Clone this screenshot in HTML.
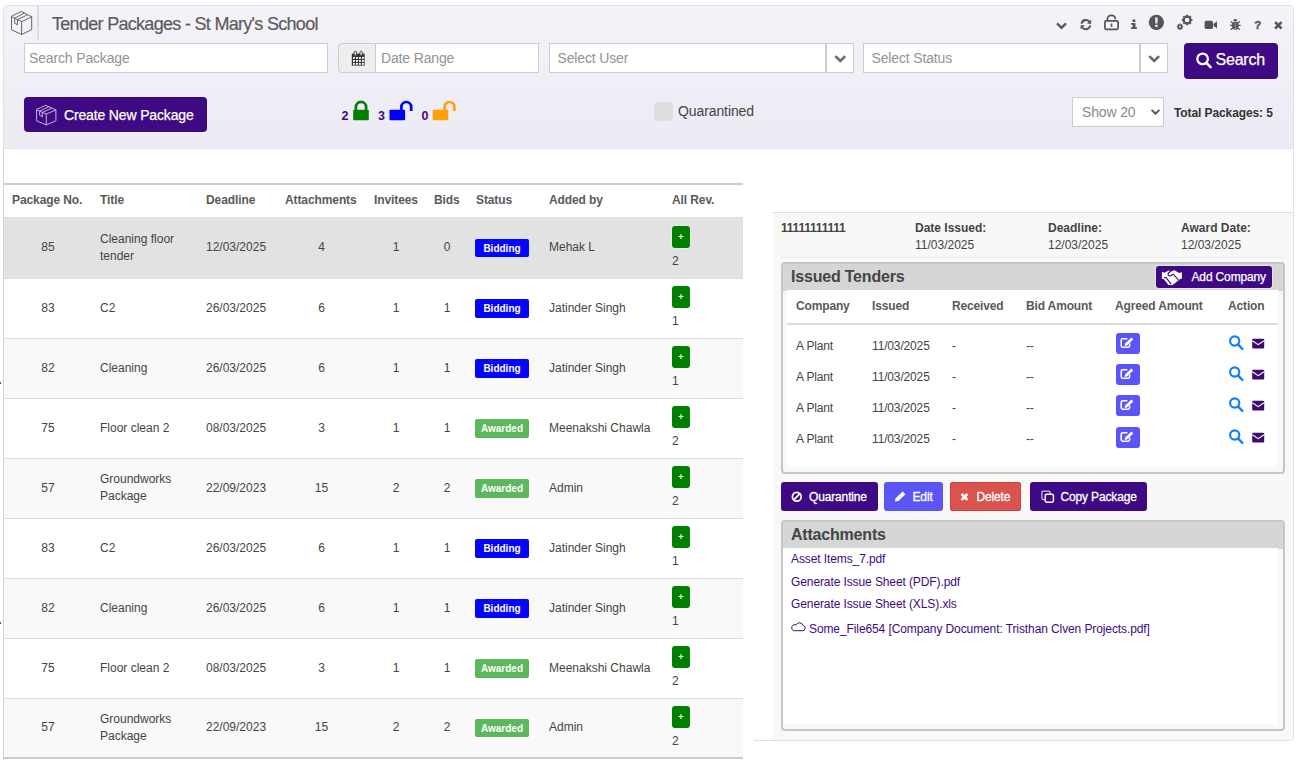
<!DOCTYPE html>
<html lang="en">
<head>
<meta charset="utf-8">
<title>Tender Packages - St Mary's School</title>
<style>
*{box-sizing:border-box;margin:0;padding:0}
html,body{width:1300px;height:760px;overflow:hidden;background:#fff}
body{font-family:"Liberation Sans",Arial,sans-serif;font-size:12px;color:#333;position:relative}
.abs{position:absolute}
#panel{left:3px;top:5px;width:1291px;height:736px;border:1px solid #e0e0e6;border-bottom:0;border-radius:5px 5px 5px 0;background:#fff}
#lborder{left:3px;top:150px;width:1px;height:610px;background:#d4d4d8}
#rbox{left:754px;top:700px;width:540px;height:41px;border:1px solid #e0e0e6;border-top:0;border-left:0;border-radius:0 0 5px 0}
#band{left:4px;top:6px;width:1289px;height:143px;background:linear-gradient(#f4f3f9,#ecebf4);border-radius:4px 4px 0 0;border-bottom:1px solid #e4e3ec}
#sep{left:37px;top:6px;width:1.6px;height:34px;background:#dddce4}
#title{left:52px;top:13px;font-size:18px;letter-spacing:-0.7px;color:#5c5c5c;-webkit-text-stroke:0.2px #5c5c5c;line-height:22px;white-space:nowrap}
.inp{background:#fff;border:1px solid #ccc;height:30px;line-height:29px;font-size:14px;color:#939393;padding-left:4px;white-space:nowrap;letter-spacing:-0.15px}
.btnp{background:#3d0a84;color:#fff;border-radius:4px;white-space:nowrap;-webkit-text-stroke:0.25px #fff}
.ht{font-weight:bold;color:#555;line-height:14px}
#pk{left:4px;top:183px;width:739px;border-collapse:collapse;table-layout:fixed;font-size:12px;color:#444;border-top:2px solid #ccc;border-bottom:2px solid #ccc}
#pk th{height:33px;padding:0 8px 2px;text-align:left;font-weight:bold;color:#5a5a5a;vertical-align:middle;white-space:nowrap;letter-spacing:-0.1px}
#pk td{height:60px;padding:0 8px;vertical-align:middle;line-height:17px;border-top:1px solid #ddd}
#pk tr.sel td{background:#e2e2e2;height:61px}
#pk tr.odd td{background:#f9f9f9}
#pk td.c{text-align:center}
.bdg{display:inline-block;width:54px;height:18.5px;line-height:19.5px;position:relative;top:0.4px;text-align:center;border-radius:2px;color:#fff;font-weight:bold;font-size:10px;vertical-align:middle;margin-left:-1px}
.bid{background:#0505ff}
.awd{background:#5cb85c}
.plus{display:inline-block;width:18.6px;height:22px;background:#008000;border-radius:3px;color:#fff;font-weight:bold;font-size:9px;line-height:22px;text-align:center;margin-bottom:5px;margin-left:-0.3px;box-shadow:0 0 0 0.6px rgba(255,255,255,0.5)}
#pk td.rv{line-height:16px;padding-bottom:1px}
#pk tr.sel td.rv{padding-bottom:0}
#rp{left:773px;top:212px;width:520px;height:528px;background:#f8f8f8;border-top:1px solid #ddd}
.meta{font-size:12px;line-height:17px;color:#444;white-space:nowrap}
.meta b{color:#444;display:block}
.ipanel{border:2px solid #c6c6c6;border-radius:4px;background:#f8f8f8;overflow:hidden}
.ipanel .hd{height:27px;background:#d6d6d6;font-size:16px;font-weight:bold;color:#444;line-height:26px;padding-left:8px;letter-spacing:-0.2px}
#it{left:787px;top:290px;width:491px;height:177px;background:#fff}
#it .h{position:absolute;top:8px;font-weight:bold;color:#5a5a5a;font-size:12px;line-height:17px;white-space:nowrap;letter-spacing:-0.15px}
#it .r{position:absolute;font-size:12px;color:#444;line-height:17px;white-space:nowrap;letter-spacing:-0.15px}
.ebtn{position:absolute;width:23.5px;height:21px;border-radius:3px;background:#5b55f6}
.sbtn{color:#fff;border-radius:3px;font-size:12px;height:29px;line-height:30.5px;white-space:nowrap;letter-spacing:-0.15px;-webkit-text-stroke:0.3px #fff}
.att{font-size:12px;color:#3d0a84;line-height:17px;white-space:nowrap;letter-spacing:-0.1px}
.lk{font-size:12.5px;font-weight:bold;color:#3d0a84;line-height:14px}
</style>
</head>
<body>
<div id="panel" class="abs"></div>
<div id="rbox" class="abs"></div>
<div id="band" class="abs"></div>
<div id="lborder" class="abs"></div>
<div id="sep" class="abs"></div>
<div class="abs" style="left:0;top:382px;width:1.3px;height:2.2px;background:#3d0a84;border-radius:0 1px 1px 0"></div>
<div class="abs" style="left:0;top:622px;width:1.3px;height:2.2px;background:#3d0a84;border-radius:0 1px 1px 0"></div>
<div id="title" class="abs">Tender Packages - St Mary's School</div>
<div class="abs" style="left:1253px;top:17.6px;width:9.6px;text-align:center;font-weight:bold;font-size:11.5px;line-height:14px;color:#555;-webkit-text-stroke:0.4px #555">?</div>
<div class="abs inp" style="left:24px;top:43px;width:304px">Search Package</div>
<div class="abs" style="left:338px;top:43px;width:38px;height:30px;background:#eee;border:1px solid #ccc;border-radius:4px 0 0 4px"></div>
<div class="abs inp" style="left:376px;top:43px;width:163px;border-left:0;padding-left:5px">Date Range</div>
<div class="abs inp" style="left:549px;top:43px;width:277px;padding-left:7.5px">Select User</div>
<div class="abs inp" style="left:826px;top:43px;width:28px"></div>
<div class="abs inp" style="left:863px;top:43px;width:277px;padding-left:7.5px">Select Status</div>
<div class="abs inp" style="left:1140px;top:43px;width:28px"></div>
<div class="abs btnp" style="left:1184px;top:43px;width:94px;height:36px;font-size:16px;line-height:33px;padding-left:31.5px;letter-spacing:-0.2px">Search</div>
<div class="abs btnp" style="left:24px;top:97px;width:183px;height:35px;font-size:14px;line-height:36px;padding-left:40px;letter-spacing:-0.15px">Create New Package</div>
<div class="abs lk" style="left:341.5px;top:108.8px">2</div>
<div class="abs lk" style="left:378px;top:108.8px">3</div>
<div class="abs lk" style="left:421.5px;top:108.8px">0</div>
<div class="abs" style="left:654px;top:101.7px;width:19px;height:19px;border-radius:4px;background:#dcdedf"></div>
<div class="abs" style="left:678px;top:101.5px;font-size:14px;color:#444;line-height:18px;letter-spacing:-0.1px">Quarantined</div>
<div class="abs" style="left:1072px;top:97px;width:92px;height:30px;background:#fff;border:1px solid #ccc;font-size:14px;color:#8a8a8a;line-height:29px;padding-left:9px;letter-spacing:-0.15px">Show 20</div>
<div class="abs" style="left:1174px;top:106px;font-size:12px;font-weight:bold;color:#333;line-height:14px;white-space:nowrap;letter-spacing:-0.1px">Total Packages: 5</div>
<table id="pk" class="abs"><colgroup><col style="width:88px"><col style="width:106px"><col style="width:79px"><col style="width:89px"><col style="width:60px"><col style="width:42px"><col style="width:73px"><col style="width:123px"><col style="width:79px"></colgroup>
<thead><tr><th>Package No.</th><th>Title</th><th>Deadline</th><th>Attachments</th><th>Invitees</th><th>Bids</th><th>Status</th><th>Added by</th><th>All Rev.</th></tr></thead><tbody>
<tr class="sel"><td class="c">85</td><td>Cleaning floor<br>tender</td><td>12/03/2025</td><td class="c">4</td><td class="c">1</td><td class="c">0</td><td><span class="bdg bid">Bidding</span></td><td>Mehak L</td><td class="rv"><span class="plus">+</span><br>2</td></tr>
<tr class=""><td class="c">83</td><td>C2</td><td>26/03/2025</td><td class="c">6</td><td class="c">1</td><td class="c">1</td><td><span class="bdg bid">Bidding</span></td><td>Jatinder Singh</td><td class="rv"><span class="plus">+</span><br>1</td></tr>
<tr class="odd"><td class="c">82</td><td>Cleaning</td><td>26/03/2025</td><td class="c">6</td><td class="c">1</td><td class="c">1</td><td><span class="bdg bid">Bidding</span></td><td>Jatinder Singh</td><td class="rv"><span class="plus">+</span><br>1</td></tr>
<tr class=""><td class="c">75</td><td>Floor clean 2</td><td>08/03/2025</td><td class="c">3</td><td class="c">1</td><td class="c">1</td><td><span class="bdg awd">Awarded</span></td><td>Meenakshi Chawla</td><td class="rv"><span class="plus">+</span><br>2</td></tr>
<tr class="odd"><td class="c">57</td><td>Groundworks<br>Package</td><td>22/09/2023</td><td class="c">15</td><td class="c">2</td><td class="c">2</td><td><span class="bdg awd">Awarded</span></td><td>Admin</td><td class="rv"><span class="plus">+</span><br>2</td></tr>
<tr class=""><td class="c">83</td><td>C2</td><td>26/03/2025</td><td class="c">6</td><td class="c">1</td><td class="c">1</td><td><span class="bdg bid">Bidding</span></td><td>Jatinder Singh</td><td class="rv"><span class="plus">+</span><br>1</td></tr>
<tr class="odd"><td class="c">82</td><td>Cleaning</td><td>26/03/2025</td><td class="c">6</td><td class="c">1</td><td class="c">1</td><td><span class="bdg bid">Bidding</span></td><td>Jatinder Singh</td><td class="rv"><span class="plus">+</span><br>1</td></tr>
<tr class=""><td class="c">75</td><td>Floor clean 2</td><td>08/03/2025</td><td class="c">3</td><td class="c">1</td><td class="c">1</td><td><span class="bdg awd">Awarded</span></td><td>Meenakshi Chawla</td><td class="rv"><span class="plus">+</span><br>2</td></tr>
<tr class="odd"><td class="c">57</td><td>Groundworks<br>Package</td><td>22/09/2023</td><td class="c">15</td><td class="c">2</td><td class="c">2</td><td><span class="bdg awd">Awarded</span></td><td>Admin</td><td class="rv"><span class="plus">+</span><br>2</td></tr>
</tbody></table>
<div id="rp" class="abs"></div>
<div class="abs meta" style="left:781px;top:220px;letter-spacing:-0.2px"><b>11111111111</b></div>
<div class="abs meta" style="left:915px;top:220px"><b>Date Issued:</b>11/03/2025</div>
<div class="abs meta" style="left:1048px;top:220px"><b>Deadline:</b>12/03/2025</div>
<div class="abs meta" style="left:1181px;top:220px"><b>Award Date:</b>12/03/2025</div>
<div class="abs" style="left:781px;top:257px;width:504px;height:1px;background:#eee"></div>
<div class="abs ipanel" style="left:781px;top:262px;width:504px;height:212px"><div class="hd">Issued Tenders</div></div>
<div class="abs btnp" style="left:1156px;top:266px;width:116px;height:22px;font-size:12px;line-height:22px;padding-left:35.5px;border-radius:3px;letter-spacing:-0.15px;box-shadow:0 0 0 1px rgba(236,244,230,0.55)">Add Company</div>
<div id="it" class="abs">
<div class="h" style="left:9px">Company</div>
<div class="h" style="left:85px">Issued</div>
<div class="h" style="left:165px">Received</div>
<div class="h" style="left:239px">Bid Amount</div>
<div class="h" style="left:328px">Agreed Amount</div>
<div class="h" style="left:441px">Action</div>
<div style="position:absolute;left:0;top:33px;width:491px;height:2px;background:#ddd"></div>
<div class="r" style="left:9px;top:47.6px">A Plant</div>
<div class="r" style="left:85px;top:47.6px">11/03/2025</div>
<div class="r" style="left:165px;top:47.6px">-</div>
<div class="r" style="left:239px;top:47.6px">--</div>
<div class="ebtn" style="left:329px;top:43px"></div>
<div class="r" style="left:9px;top:78.6px">A Plant</div>
<div class="r" style="left:85px;top:78.6px">11/03/2025</div>
<div class="r" style="left:165px;top:78.6px">-</div>
<div class="r" style="left:239px;top:78.6px">--</div>
<div class="ebtn" style="left:329px;top:74px"></div>
<div class="r" style="left:9px;top:109.6px">A Plant</div>
<div class="r" style="left:85px;top:109.6px">11/03/2025</div>
<div class="r" style="left:165px;top:109.6px">-</div>
<div class="r" style="left:239px;top:109.6px">--</div>
<div class="ebtn" style="left:329px;top:105px"></div>
<div class="r" style="left:9px;top:141.4px">A Plant</div>
<div class="r" style="left:85px;top:141.4px">11/03/2025</div>
<div class="r" style="left:165px;top:141.4px">-</div>
<div class="r" style="left:239px;top:141.4px">--</div>
<div class="ebtn" style="left:329px;top:137px"></div>
</div>
<div class="abs sbtn" style="left:781px;top:482px;width:97px;background:#3d0a84;padding-left:28px;">Quarantine</div>
<div class="abs sbtn" style="left:884px;top:482px;width:59px;background:#5b55f6;padding-left:28.5px;">Edit</div>
<div class="abs sbtn" style="left:950px;top:482px;width:71px;background:#d9534f;padding-left:26.5px;box-shadow:inset 0 0 0 1px #d43f3a;">Delete</div>
<div class="abs sbtn" style="left:1030px;top:482px;width:117px;background:#3d0a84;padding-left:30.5px;">Copy Package</div>
<div class="abs ipanel" style="left:781px;top:520px;width:504px;height:211px"><div class="hd">Attachments</div></div>
<div class="abs" style="left:783px;top:548px;width:495px;height:176px;background:#fff"></div>
<div class="abs att" style="left:791px;top:551px">Asset Items_7.pdf</div>
<div class="abs att" style="left:791px;top:573.6px">Generate Issue Sheet (PDF).pdf</div>
<div class="abs att" style="left:791px;top:596px">Generate Issue Sheet (XLS).xls</div>
<div class="abs att" style="left:809px;top:621px">Some_File654 [Company Document: Tristhan Clven Projects.pdf]</div>
<svg class="abs" style="left:0;top:0" width="1300" height="760" viewBox="0 0 1300 760">
<g fill="none" stroke="#555">
<path d="M1057 23.4 L1061.5 27.9 L1066 23.4" stroke-width="2.2"/>
<path d="M1081.6 23.6 A4.3 4.3 0 0 1 1089.2 21.6" stroke-width="2.1"/>
<path d="M1090.2 25.4 A4.3 4.3 0 0 1 1082.6 27.6" stroke-width="1.9"/>
<path d="M1091.2 19.6 V23.8 H1087 Z" fill="#555" stroke="none"/>
<path d="M1080.6 29.4 V25.2 H1084.8 Z" fill="#555" stroke="none"/>
<rect x="1104.9" y="20.9" width="13.2" height="8.5" rx="1.3" stroke-width="1.7"/>
<path d="M1107.4 20.6 V19.3 A4 4 0 0 1 1115.4 19.3" stroke-width="1.7"/>
<path d="M1111.5 23.6 V26.8" stroke-width="1.6"/>
<path d="M1132.5 19.6 h2.9 v2.4 h-2.9 Z M1131.1 23 h4.4 v4.3 h1.4 v1.7 H1131.1 v-1.7 h1.5 v-2.6 h-1.5 Z" fill="#555" stroke="none"/>
<circle cx="1156.4" cy="22.3" r="7.6" fill="#555" stroke="none"/>
<path d="M1155.1 17.4 h2.6 l-0.3 6 h-2 Z M1155.2 24.7 h2.4 v2.3 h-2.4 Z" fill="#f1f0f7" stroke="none"/>
<circle cx="1187.1" cy="20" r="3.4" stroke-width="2.2"/><path d="M1191.20 20.00 L1192.40 20.00 M1190.00 22.90 L1190.85 23.75 M1187.10 24.10 L1187.10 25.30 M1184.20 22.90 L1183.35 23.75 M1183.00 20.00 L1181.80 20.00 M1184.20 17.10 L1183.35 16.25 M1187.10 15.90 L1187.10 14.70 M1190.00 17.10 L1190.85 16.25 " stroke-width="2.1"/>
<circle cx="1180" cy="26.7" r="1.7" stroke-width="1.6"/><path d="M1182.10 26.70 L1183.20 26.70 M1181.48 28.18 L1182.26 28.96 M1180.00 28.80 L1180.00 29.90 M1178.52 28.18 L1177.74 28.96 M1177.90 26.70 L1176.80 26.70 M1178.52 25.22 L1177.74 24.44 M1180.00 24.60 L1180.00 23.50 M1181.48 25.22 L1182.26 24.44 " stroke-width="1.3"/>
<rect x="1204.6" y="20.8" width="8.4" height="8.2" rx="1.6" fill="#555" stroke="none"/>
<path d="M1213.4 24 L1217 21.2 V28.6 L1213.4 25.8 Z" fill="#555" stroke="none"/>
<ellipse cx="1235.3" cy="25.7" rx="3.3" ry="4.1" fill="#555" stroke="none"/>
<path d="M1233.2 21 A2.1 2.1 0 0 1 1237.4 21 Z" fill="#555" stroke="none"/>
<path d="M1230 25.4 H1240.6 M1230.6 21.4 L1233 23.2 M1240 21.4 L1237.6 23.2 M1230.8 29.8 L1233 27.6 M1239.8 29.8 L1237.6 27.6" stroke-width="1.3"/>
<path d="M1235.3 22.5 V29" stroke="#bdbcc4" stroke-width="0.7"/>
<path d="M1275.1 22.1 L1281.5 28.5 M1281.5 22.1 L1275.1 28.5" stroke-width="2.6"/>
</g>
<rect x="351.8" y="53.6" width="12.8" height="12" fill="#333"/>
<rect x="353" y="57" width="1.9" height="1.9" fill="#fff"/>
<rect x="355.97" y="57" width="1.9" height="1.9" fill="#fff"/>
<rect x="358.94" y="57" width="1.9" height="1.9" fill="#fff"/>
<rect x="361.91" y="57" width="1.9" height="1.9" fill="#fff"/>
<rect x="353" y="59.95" width="1.9" height="1.9" fill="#fff"/>
<rect x="355.97" y="59.95" width="1.9" height="1.9" fill="#fff"/>
<rect x="358.94" y="59.95" width="1.9" height="1.9" fill="#fff"/>
<rect x="361.91" y="59.95" width="1.9" height="1.9" fill="#fff"/>
<rect x="353" y="62.9" width="1.9" height="1.9" fill="#fff"/>
<rect x="355.97" y="62.9" width="1.9" height="1.9" fill="#fff"/>
<rect x="358.94" y="62.9" width="1.9" height="1.9" fill="#fff"/>
<rect x="361.91" y="62.9" width="1.9" height="1.9" fill="#fff"/>
<rect x="354.2" y="51.2" width="2.4" height="4.2" rx="1" fill="#cfe0ff" stroke="#333" stroke-width="0.8"/>
<rect x="359.9" y="51.2" width="2.4" height="4.2" rx="1" fill="#cfe0ff" stroke="#333" stroke-width="0.8"/>
<path d="M835.4 56.1 L840.3 61 L845.2 56.1" fill="none" stroke="#6a6a6a" stroke-width="2.6"/>
<path d="M1149.3 56.1 L1154.2 61 L1159.1 56.1" fill="none" stroke="#6a6a6a" stroke-width="2.6"/>
<path d="M1151.6 109.8 L1155.5 113.7 L1159.4 109.8" fill="none" stroke="#555" stroke-width="1.9"/>
<circle cx="1202.6" cy="58.9" r="5.3" fill="none" stroke="#fff" stroke-width="2.3"/>
<path d="M1206.4 62.9 L1210.6 67.1" stroke="#fff" stroke-width="2.6" stroke-linecap="round"/>
<g fill="none" stroke="#666" stroke-width="1" stroke-linejoin="round" stroke-linecap="round"><path d="M21.60 11.60 L31.70 16.81 L31.70 29.68 L21.60 34.50 L11.50 29.68 L11.50 16.71 Z"/><path d="M11.50 16.71 L21.60 21.72 L31.70 16.81 M21.60 21.72 L21.60 34.50"/><path d="M24.05 13.17 L14.64 18.28 L14.64 23.10 L17.19 24.57 M27.09 14.94 L17.48 19.76 L17.48 24.57"/></g>
<g fill="none" stroke="#c3b4e4" stroke-width="1" stroke-linejoin="round" stroke-linecap="round"><path d="M46.25 105.50 L55.90 109.91 L55.90 120.82 L46.25 124.90 L36.60 120.82 L36.60 109.83 Z"/><path d="M36.60 109.83 L46.25 114.08 L55.90 109.91 M46.25 114.08 L46.25 124.90"/><path d="M48.59 106.83 L39.60 111.16 L39.60 115.24 L42.03 116.49 M51.50 108.33 L42.32 112.41 L42.32 116.49"/></g>
<rect x="353.2" y="109.8" width="15.6" height="10.4" rx="0.8" fill="#008000"/><path d="M355.9 110.5 V107 A5.1 5.1 0 0 1 366.1 107 V110.5" fill="none" stroke="#008000" stroke-width="2.7"/>
<rect x="389.5" y="109.8" width="15.6" height="10.4" rx="0.8" fill="#0000ff"/><path d="M401.4 110.5 V106.9 A4.9 4.9 0 0 1 411.2 106.9 V111" fill="none" stroke="#0000ff" stroke-width="2.7"/>
<rect x="432.7" y="109.8" width="15.6" height="10.4" rx="0.8" fill="#ffa00a"/><path d="M444.6 110.5 V106.9 A4.9 4.9 0 0 1 454.4 106.9 V111" fill="none" stroke="#ffa00a" stroke-width="2.7"/>
<path d="M1161.9 271.7 L1164.6 272.7 L1168.7 270.6 L1171.4 271.4 L1174.5 270.3 L1179 272.9 L1181.9 272.2 V278.7 L1180.6 278.7 L1178.2 280.6 L1172.6 285 L1168.4 285 L1163.9 279.2 L1161.9 278.4 Z" fill="#fff"/>
<path d="M1170.8 271.3 Q1167.4 273 1168.2 274.8 Q1169.4 276.8 1171.2 275.5 L1173.2 274.2 L1178.4 279.8 M1164.1 277.9 L1165.9 277.3 L1171.2 284.2" fill="none" stroke="#3d0a84" stroke-width="1.15"/>
<path d="M1129.6 343.6 V345.8 a1.4 1.4 0 0 1 -1.4 1.4 H1122.6 a1.4 1.4 0 0 1 -1.4 -1.4 V340.2 a1.4 1.4 0 0 1 1.4 -1.4 H1127.4" fill="none" stroke="#fff" stroke-width="1.5"/>
<path d="M1124.6 346 L1125.2 343.6 L1131.4 337.6 L1133.2 339.4 L1127 345.4 Z" fill="#fff"/>
<circle cx="1234.7" cy="341" r="4.6" fill="none" stroke="#0d7ff5" stroke-width="2.1"/>
<path d="M1238 344.4 L1242.4 349" stroke="#0d7ff5" stroke-width="2.4" stroke-linecap="round"/>
<rect x="1252.2" y="338.8" width="12" height="9.6" rx="1" fill="#3d0a70"/>
<path d="M1252.4 340.8 L1258.2 344.6 L1264 340.8" fill="none" stroke="#fff" stroke-width="1.1"/>
<path d="M1129.6 374.6 V376.8 a1.4 1.4 0 0 1 -1.4 1.4 H1122.6 a1.4 1.4 0 0 1 -1.4 -1.4 V371.2 a1.4 1.4 0 0 1 1.4 -1.4 H1127.4" fill="none" stroke="#fff" stroke-width="1.5"/>
<path d="M1124.6 377 L1125.2 374.6 L1131.4 368.6 L1133.2 370.4 L1127 376.4 Z" fill="#fff"/>
<circle cx="1234.7" cy="372" r="4.6" fill="none" stroke="#0d7ff5" stroke-width="2.1"/>
<path d="M1238 375.4 L1242.4 380" stroke="#0d7ff5" stroke-width="2.4" stroke-linecap="round"/>
<rect x="1252.2" y="369.8" width="12" height="9.6" rx="1" fill="#3d0a70"/>
<path d="M1252.4 371.8 L1258.2 375.6 L1264 371.8" fill="none" stroke="#fff" stroke-width="1.1"/>
<path d="M1129.6 405.6 V407.8 a1.4 1.4 0 0 1 -1.4 1.4 H1122.6 a1.4 1.4 0 0 1 -1.4 -1.4 V402.2 a1.4 1.4 0 0 1 1.4 -1.4 H1127.4" fill="none" stroke="#fff" stroke-width="1.5"/>
<path d="M1124.6 408 L1125.2 405.6 L1131.4 399.6 L1133.2 401.4 L1127 407.4 Z" fill="#fff"/>
<circle cx="1234.7" cy="403" r="4.6" fill="none" stroke="#0d7ff5" stroke-width="2.1"/>
<path d="M1238 406.4 L1242.4 411" stroke="#0d7ff5" stroke-width="2.4" stroke-linecap="round"/>
<rect x="1252.2" y="400.8" width="12" height="9.6" rx="1" fill="#3d0a70"/>
<path d="M1252.4 402.8 L1258.2 406.6 L1264 402.8" fill="none" stroke="#fff" stroke-width="1.1"/>
<path d="M1129.6 437.6 V439.8 a1.4 1.4 0 0 1 -1.4 1.4 H1122.6 a1.4 1.4 0 0 1 -1.4 -1.4 V434.2 a1.4 1.4 0 0 1 1.4 -1.4 H1127.4" fill="none" stroke="#fff" stroke-width="1.5"/>
<path d="M1124.6 440 L1125.2 437.6 L1131.4 431.6 L1133.2 433.4 L1127 439.4 Z" fill="#fff"/>
<circle cx="1234.7" cy="435" r="4.6" fill="none" stroke="#0d7ff5" stroke-width="2.1"/>
<path d="M1238 438.4 L1242.4 443" stroke="#0d7ff5" stroke-width="2.4" stroke-linecap="round"/>
<rect x="1252.2" y="432.8" width="12" height="9.6" rx="1" fill="#3d0a70"/>
<path d="M1252.4 434.8 L1258.2 438.6 L1264 434.8" fill="none" stroke="#fff" stroke-width="1.1"/>
<circle cx="796.8" cy="496.7" r="4.4" fill="none" stroke="#fff" stroke-width="1.7"/><path d="M793.8 499.8 L799.9 493.6" stroke="#fff" stroke-width="1.7"/>
<path d="M894.9 501.4 L895.7 498.2 L902.6 491.4 L905.4 494.2 L898.5 501 Z" fill="#fff"/>
<path d="M961.6 494 L967.4 499.9 M967.4 494 L961.6 499.9" stroke="#fff" stroke-width="2.6"/>
<rect x="1041.9" y="491.2" width="8.2" height="8.4" rx="1.4" fill="none" stroke="#cfc2ea" stroke-width="1.2"/>
<rect x="1045.2" y="494.2" width="8.2" height="8" rx="1.4" fill="#3d0a84" stroke="#fff" stroke-width="1.4"/>
<path d="M793.6 630.7 H802.8 A2.7 2.7 0 0 0 803.1 625.4 A3.8 3.8 0 0 0 796.1 624.9 A2.95 2.95 0 0 0 793.6 630.7 Z" fill="none" stroke="#3d0a84" stroke-width="1"/>
</svg>
</body>
</html>
